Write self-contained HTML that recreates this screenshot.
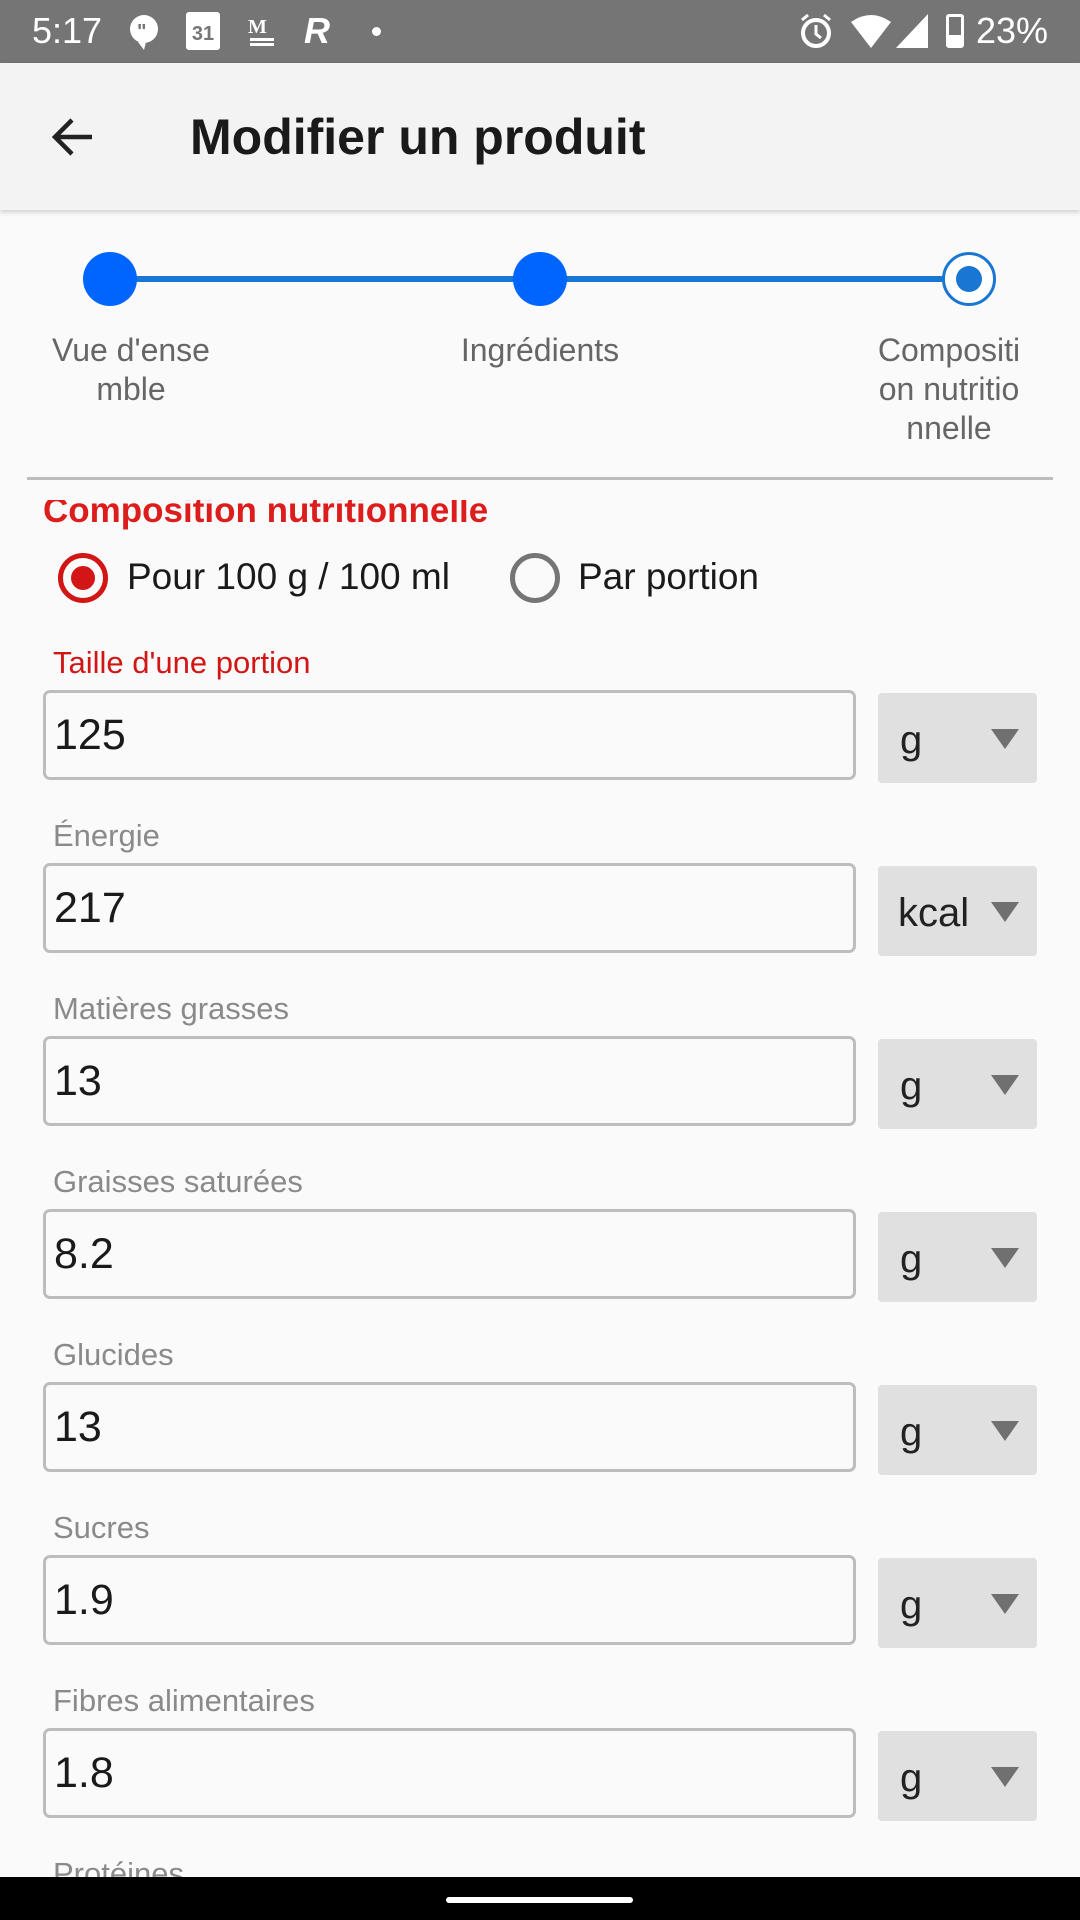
<!DOCTYPE html>
<html><head><meta charset="utf-8"><style>
*{margin:0;padding:0;box-sizing:border-box}
body{width:1080px;height:1920px;overflow:hidden;background:#fafafa;font-family:"Liberation Sans",Roboto,sans-serif;position:relative}
.a{position:absolute}
.sb{left:0;top:0;width:1080px;height:63px;background:#757575;color:#fff}
.ab{left:0;top:63px;width:1080px;height:147px;background:#f3f3f3;box-shadow:0 2px 5px rgba(0,0,0,.18)}
.lbl{font-size:32px;color:#666;text-align:center;line-height:39px}
.fl{left:53px;font-size:31px;color:#8a8a8a}
.in{left:43px;width:813px;height:90px;border:3px solid #bdbdbd;border-radius:7px;background:#fafafa;font-size:43px;color:#1a1a1a;padding-left:8px;line-height:84px}
.sp{left:878px;width:159px;height:90px;background:#e0e0e0;border-radius:4px;font-size:40px;color:#222;line-height:94px;padding-left:22px}
.tri{position:absolute;right:18px;top:36px;width:0;height:0;border-left:14px solid transparent;border-right:14px solid transparent;border-top:20px solid #707070}
</style></head><body>
<div class="a sb">
<div class="a" style="left:32px;top:10px;font-size:36px">5:17</div>
<svg class="a" style="left:128px;top:14px" width="32" height="36"><circle cx="16" cy="15" r="14" fill="#fff"/><path d="M10 28 L16 36 L18 28Z" fill="#fff"/><text x="9" y="24" font-size="20" fill="#757575" font-weight="bold">"</text></svg>
<div class="a" style="left:186px;top:12px;width:34px;height:38px;background:#fff;border-radius:3px;color:#757575;font-size:20px;text-align:center;line-height:44px;font-weight:bold">31</div>
<div class="a" style="left:248px;top:16px;font-size:20px;color:#fff;font-family:'Liberation Serif',serif;font-weight:bold">M<br></div>
<div class="a" style="left:250px;top:38px;width:24px;height:3px;background:#fff;box-shadow:0 5px 0 #fff"></div>
<div class="a" style="left:304px;top:10px;font-size:36px;font-style:italic;font-weight:bold">R</div>
<div class="a" style="left:372px;top:27px;width:9px;height:9px;border-radius:50%;background:#fff"></div>
<svg class="a" style="left:798px;top:12px" width="36" height="38"><circle cx="18" cy="21" r="13" fill="none" stroke="#fff" stroke-width="4"/><path d="M18 13v9l5 4" stroke="#fff" stroke-width="3" fill="none"/><path d="M4 8l6-5M32 8l-6-5" stroke="#fff" stroke-width="3"/></svg>
<svg class="a" style="left:850px;top:14px" width="42" height="34"><path d="M1 8 Q21 -6 41 8 L21 34Z" fill="#fff"/></svg>
<svg class="a" style="left:896px;top:14px" width="32" height="34"><path d="M32 0 V34 H0Z" fill="#fff"/></svg>
<div class="a" style="left:946px;top:14px;width:18px;height:34px;border:3px solid #fff;border-radius:3px"><div style="position:absolute;left:0;right:0;bottom:0;height:10px;background:#fff"></div></div>
<div class="a" style="left:976px;top:10px;font-size:36px">23%</div>
</div>
<div class="a ab">
<svg class="a" style="left:50px;top:51px" width="46" height="46"><path d="M42 23H6M22 6L5 23L22 40" stroke="#222" stroke-width="4.5" fill="none"/></svg>
<div class="a" style="left:190px;top:45px;font-size:50px;color:#1a1a1a;font-weight:bold">Modifier un produit</div>
</div>
<div class="a" style="left:110px;top:276px;width:860px;height:6px;background:#1976d2"></div>
<div class="a" style="left:83px;top:252px;width:54px;height:54px;border-radius:50%;background:#0064ff"></div>
<div class="a" style="left:513px;top:252px;width:54px;height:54px;border-radius:50%;background:#0064ff"></div>
<div class="a" style="left:942px;top:252px;width:54px;height:54px;border-radius:50%;background:#fff;border:3px solid #1976d2"><div style="position:absolute;left:11px;top:11px;width:26px;height:26px;border-radius:50%;background:#1976d2"></div></div>
<div class="a lbl" style="left:31px;top:331px;width:200px">Vue d'ense<br>mble</div>
<div class="a lbl" style="left:410px;top:331px;width:260px">Ingrédients</div>
<div class="a lbl" style="left:849px;top:331px;width:200px">Compositi<br>on nutritio<br>nnelle</div>
<div class="a" style="left:27px;top:477px;width:1026px;height:3px;background:#bdbdbd"></div>
<div class="a" style="left:0;top:500px;width:1080px;height:32px;overflow:hidden"><div class="a" style="left:43px;top:-9px;font-size:35px;font-weight:bold;color:#dd1c1c">Composition nutritionnelle</div></div>
<div class="a" style="left:58px;top:553px;width:50px;height:50px;border-radius:50%;border:5px solid #d21515"><div style="position:absolute;left:8px;top:8px;width:24px;height:24px;border-radius:50%;background:#d21515"></div></div>
<div class="a" style="left:127px;top:556px;font-size:37px;color:#1a1a1a">Pour 100 g / 100 ml</div>
<div class="a" style="left:510px;top:553px;width:50px;height:50px;border-radius:50%;border:5px solid #757575"></div>
<div class="a" style="left:578px;top:556px;font-size:37px;color:#1a1a1a">Par portion</div>

<div class="a fl" style="top:645px;color:#d21515">Taille d'une portion</div>
<div class="a in" style="top:690px">125</div><div class="a sp" style="top:693px">g<div class="tri"></div></div>

<div class="a fl" style="top:818px">Énergie</div>
<div class="a in" style="top:863px">217</div><div class="a sp" style="top:866px;padding-left:20px">kcal<div class="tri"></div></div>

<div class="a fl" style="top:991px">Matières grasses</div>
<div class="a in" style="top:1036px">13</div><div class="a sp" style="top:1039px">g<div class="tri"></div></div>

<div class="a fl" style="top:1164px">Graisses saturées</div>
<div class="a in" style="top:1209px">8.2</div><div class="a sp" style="top:1212px">g<div class="tri"></div></div>

<div class="a fl" style="top:1337px">Glucides</div>
<div class="a in" style="top:1382px">13</div><div class="a sp" style="top:1385px">g<div class="tri"></div></div>

<div class="a fl" style="top:1510px">Sucres</div>
<div class="a in" style="top:1555px">1.9</div><div class="a sp" style="top:1558px">g<div class="tri"></div></div>

<div class="a fl" style="top:1683px">Fibres alimentaires</div>
<div class="a in" style="top:1728px">1.8</div><div class="a sp" style="top:1731px">g<div class="tri"></div></div>

<div class="a fl" style="top:1856px">Protéines</div>
<div class="a" style="left:0;top:1877px;width:1080px;height:43px;background:#000"><div class="a" style="left:446px;top:20px;width:187px;height:6px;border-radius:3px;background:#fff"></div></div>
</body></html>
